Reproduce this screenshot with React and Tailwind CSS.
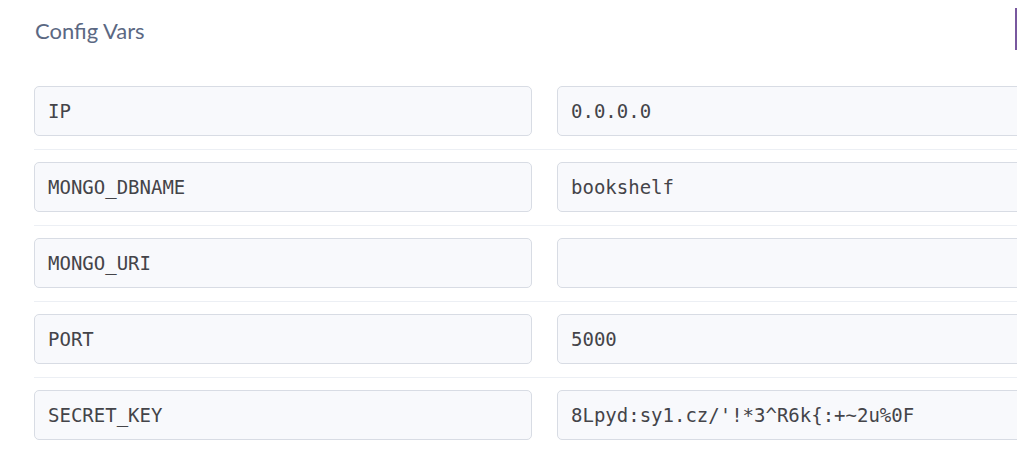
const vars = [
  { key: 'IP', value: '0.0.0.0' },
  { key: 'MONGO_DBNAME', value: 'bookshelf' },
  { key: 'MONGO_URI', value: '' },
  { key: 'PORT', value: '5000' },
  { key: 'SECRET_KEY', value: "8Lpyd:sy1.cz/'!*3^R6k{:+~2u%0F" },
];

const fieldClass =
  "h-[50px] shrink-0 rounded-[5px] border border-[#d8dce4] bg-[#f8f9fc] pl-[13px] flex items-center text-[19px] text-[#444449] font-['DejaVu_Sans_Mono',monospace] whitespace-nowrap";

const VarRow = ({ name, value }) => (
  <div className="flex gap-[25px] py-[12.5px] border-b border-[#eceff4] last:border-b-0">
    <div className={`${fieldClass} w-[498px]`}>{name}</div>
    <div className={`${fieldClass} w-[480px]`}>{value}</div>
  </div>
);

export default function App() {
  return (
    <div className="w-[1017px] h-[451px] overflow-hidden bg-white">
      <div className="flex justify-between items-start pt-2 h-[73.5px]">
        <h2 className="pl-[35px] mt-[2px] h-[42px] leading-[42px] text-[22px] text-[#5b6883] font-['Lato',sans-serif]">
          Config Vars
        </h2>
        <div className="h-[42px] w-[2px] bg-[#79589f]" />
      </div>
      <div className="pl-[34px]">
        {vars.map((v) => (
          <VarRow key={v.key} name={v.key} value={v.value} />
        ))}
      </div>
    </div>
  );
}
